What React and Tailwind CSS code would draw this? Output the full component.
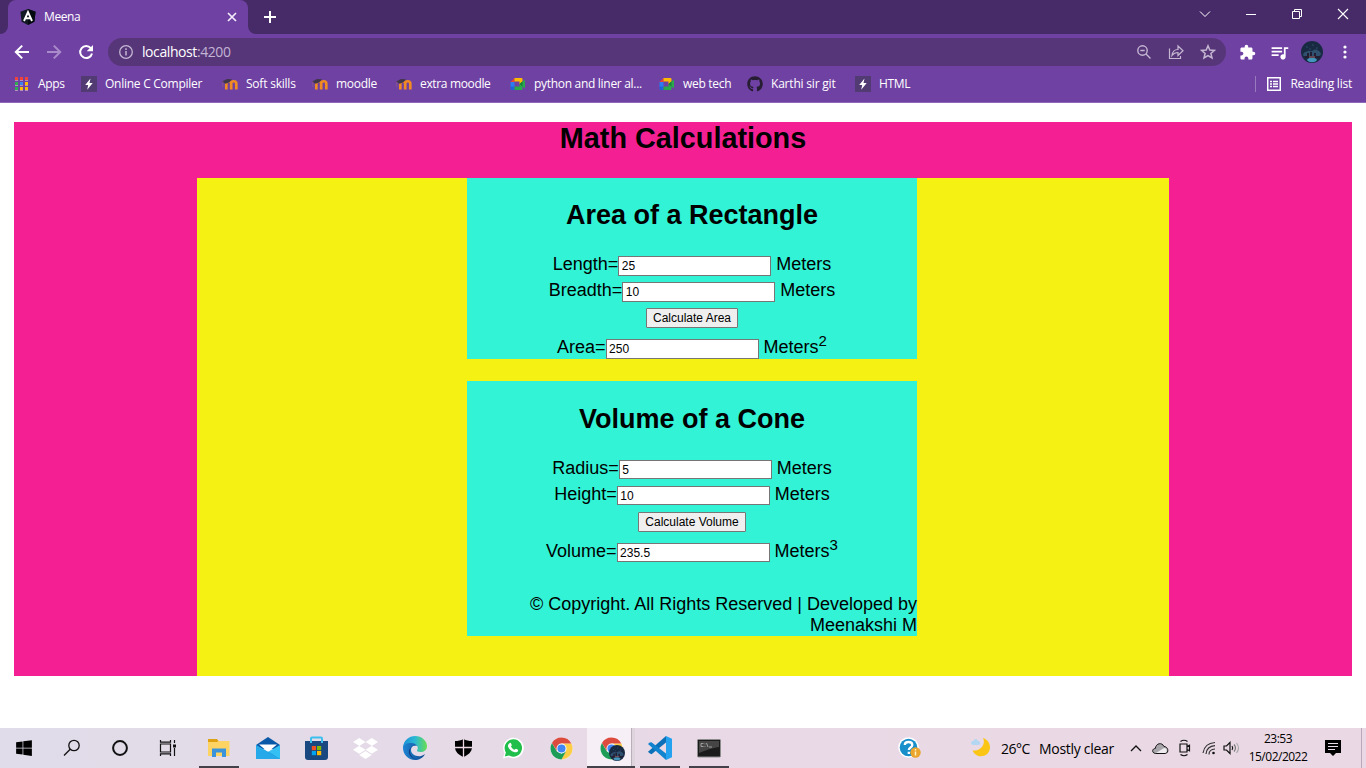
import React from "react";
import { FaWindows, FaGithub, FaDropbox } from "react-icons/fa";
import { MdExtension, MdQueueMusic } from "react-icons/md";

const ui = "font-['Open_Sans','Noto_Sans',sans-serif]";

function AngularIcon() {
  return (
    <svg width="16" height="16" viewBox="0 0 16 16">
      <path d="M8 0l7.6 2.7-1.2 10L8 16l-6.400-3.300L.4 2.700z" fill="#111a24" />
      <path d="M8 0l7.600 2.700-1.200 10L8 16z" fill="#050a10" />
      <path d="M4 12L8 3l4 9M5.500 9.300h5" fill="none" stroke="#fff" strokeWidth="1.900" />
    </svg>
  );
}

function AppsIcon() {
  const colors = ["#f0433a", "#f0433a", "#f0433a", "#31a852", "#3b82f0", "#fbbc05", "#31a852", "#fbbc05", "#fbbc05"];
  return (
    <svg width="14" height="14" viewBox="0 0 14 14">
      {colors.map((c, i) => (
        <g key={i}>
          <rect x={(i % 3) * 5} y={Math.floor(i / 3) * 5} width="3" height="4" fill="#b58fc0" />
          <rect x={(i % 3) * 5} y={Math.floor(i / 3) * 5} width="3" height="3" fill={c} />
        </g>
      ))}
    </svg>
  );
}

function BoltIcon() {
  return (
    <svg width="16" height="16" viewBox="0 0 16 16">
      <rect width="16" height="16" fill="#523a73" />
      <path d="M9.500 2.500L4.200 9h3l-1 4.700L11.700 7H8.500z" fill="#fff" />
    </svg>
  );
}

function MoodleIcon() {
  return (
    <svg width="16" height="16" viewBox="0 0 16 16">
      <path d="M4.300 13.500V7.500c0-3 4.900-3 4.900 0v6M9.200 7.500c0-3 5.100-3 5.100 0v6" fill="none" stroke="#f08a22" strokeWidth="2.700" />
      <path d="M0 5.500l5-2.500 5 .300-2.500 3-4 1.500z" fill="#40364a" />
      <path d="M.8 5.500V11" stroke="#8a5c86" strokeWidth=".8" />
    </svg>
  );
}

function MeetIcon() {
  return (
    <svg width="16" height="16" viewBox="0 0 16 16">
      <path d="M.5 6L4.500 2v4z" fill="#ea4335" />
      <path d="M4.500 2h6.700c.8 0 1.300.5 1.300 1.300V6L9.500 8.500V5.500h-5z" fill="#ffba00" />
      <path d="M.5 6h4v5h-4z" fill="#2b7cf0" />
      <path d="M.5 10.500h4V14H2C1 14 .5 13.500.5 12.700z" fill="#1c66da" />
      <path d="M4.500 10.500h5V8L15 3.500v9L12.500 10.500v2.200c0 .8-.5 1.300-1.300 1.300H4.500z" fill="#29a84c" />
      <path d="M9.500 8l3-2.700v5.200z" fill="#188038" />
    </svg>
  );
}

function Avatar({ size }) {
  return (
    <svg width={size} height={size} viewBox="0 0 22 22">
      <circle cx="11" cy="11" r="11" fill="#182a42" />
      <path d="M2 14c1-4 4-3 5-4s2 1 4 0 3-2 5-1 3 1 4 4c-2 5-16 6-18 1z" fill="#30506f" />
      <path d="M6 19c1-3 9-3 10 0-2 3-8 3-10 0z" fill="#4596bd" />
      <path d="M3 15h3v-3h2v3h1v-4h2v4h2v-3h2v3h4v2H4z" fill="#221d31" />
      <path d="M8 16h6" stroke="#c08488" strokeWidth=".8" />
      <g fill="#46769a">
        <circle cx="6" cy="6" r=".6" /><circle cx="12" cy="4" r=".6" /><circle cx="16" cy="7" r=".6" /><circle cx="9" cy="8" r=".5" />
      </g>
    </svg>
  );
}

function ChromeIcon({ size = 23 }) {
  return (
    <svg width={size} height={size} viewBox="0 0 48 48">
      <circle cx="24" cy="24" r="23" fill="#fff" />
      <path d="M24 13.500h20.500A23 23 0 0 1 24 47l9-17.500z" fill="#fccd45" />
      <path d="M4.100 12.500A23 23 0 0 0 24 47l9.500-17.500L24 34.500 14.500 30z" fill="#1d9d58" />
      <path d="M4.100 12.500L15 30l9-16.500h20.500A23 23 0 0 0 4.100 12.500z" fill="#dc4b3e" />
      <circle cx="24" cy="24" r="10.500" fill="#fff" />
      <circle cx="24" cy="24" r="8.500" fill="#4285f4" />
    </svg>
  );
}

const bookmarks = [
  { label: "Apps", icon: <AppsIcon />, w: "w-[67px]", gap: "gap-[9px] pl-px", t: "tracking-[-0.3px]" },
  { label: "Online C Compiler", icon: <BoltIcon />, w: "w-[141px]", gap: "gap-2", t: "tracking-[-0.26px]" },
  { label: "Soft skills", icon: <MoodleIcon />, w: "w-[90px]", gap: "gap-2", t: "tracking-[-0.22px]" },
  { label: "moodle", icon: <MoodleIcon />, w: "w-[84px]", gap: "gap-2", t: "tracking-[-0.3px]" },
  { label: "extra moodle", icon: <MoodleIcon />, w: "w-[114px]", gap: "gap-2", t: "tracking-[-0.35px]" },
  { label: "python and liner al...", icon: <MeetIcon />, w: "w-[149px]", gap: "gap-2", t: "tracking-[-0.3px]" },
  { label: "web tech", icon: <MeetIcon />, w: "w-[88px]", gap: "gap-2", t: "tracking-[-0.3px]" },
  { label: "Karthi sir git", icon: <FaGithub size={16} color="#271d33" />, w: "w-[108px]", gap: "gap-2", t: "tracking-[-0.2px]" },
  { label: "HTML", icon: <BoltIcon />, w: "w-[70px]", gap: "gap-2", t: "tracking-[-0.3px]" },
];

function Browser() {
  return (
    <header className={`${ui} flex h-[103px] shrink-0 flex-col border-b border-[#9068b8] bg-[#6f41a3] text-xs text-white`}>
      <div className="flex h-[34px] shrink-0 bg-[#472a68]">
        <div className="flex w-2 items-end bg-[#6f41a3]">
          <div className="h-[34px] w-2 rounded-br-lg bg-[#472a68]" />
        </div>
        <div className="flex w-60 items-center rounded-t-lg bg-[#6f41a3] pr-[11px] pl-3">
          <AngularIcon />
          <span className="ml-2 grow tracking-[-0.4px]">Meena</span>
          <svg width="10" height="10" viewBox="0 0 10 10" className="shrink-0">
            <path d="M1 1l8 8M9 1L1 9" stroke="#f3edfa" strokeWidth="1.700" />
          </svg>
        </div>
        <div className="w-2 bg-[#6f41a3]">
          <div className="h-[34px] w-2 rounded-bl-lg bg-[#472a68]" />
        </div>
        <svg width="12" height="12" viewBox="0 0 12 12" className="mt-[11px] ml-2">
          <path d="M6 0v12M0 6h12" stroke="#fff" strokeWidth="2" />
        </svg>
        <div className="ml-auto flex h-7 items-center pr-[17px]">
          <svg width="12" height="12" viewBox="0 0 12 12" className="mr-[34px]"><path d="M1 3.500l5 5 5-5" fill="none" stroke="#fff" /></svg>
          <svg width="12" height="12" viewBox="0 0 12 12" className="mr-[34px]"><path d="M1 6.500h10" stroke="#fff" /></svg>
          <svg width="12" height="12" viewBox="0 0 12 12" className="mr-[34px]"><path d="M1.500 3.500h7v7h-7zM3.500 3.500v-2h7v7h-2" fill="none" stroke="#fff" /></svg>
          <svg width="12" height="12" viewBox="0 0 12 12"><path d="M1 1l10 10M11 1L1 11" fill="none" stroke="#fff" strokeWidth="1.100" /></svg>
        </div>
      </div>
      <div className="flex h-9 shrink-0 items-center pl-3.5">
        <svg width="16" height="16" viewBox="0 0 16 16"><path d="M15 8H2M8.200 1.600L1.800 8l6.400 6.400" fill="none" stroke="#fff" strokeWidth="2" /></svg>
        <svg width="16" height="16" viewBox="0 0 16 16" className="ml-4"><path d="M1 8h13M7.800 1.600L14.200 8l-6.400 6.400" fill="none" stroke="#aa8bc9" strokeWidth="2" /></svg>
        <svg width="16" height="16" viewBox="0 0 16 16" className="ml-4">
          <path d="M12.800 4.200A6 6 0 1 0 14 9.500" fill="none" stroke="#fff" strokeWidth="2" />
          <path d="M15 1v6.300H8.700z" fill="#fff" />
        </svg>
        <div className="ml-3.5 flex h-7 w-[1118px] items-center rounded-full bg-[#563678] pr-[10px] pl-[11px] text-[14px]">
          <svg width="14" height="14" viewBox="0 0 14 14"><circle cx="7" cy="7" r="6.300" fill="none" stroke="#c5b7d3" strokeWidth="1.300" /><path d="M7 6v4.500M7 3.300v1.600" stroke="#c5b7d3" strokeWidth="1.500" /></svg>
          <span className="ml-[9px] grow tracking-[-0.42px]">localhost<span className="text-[#c3b3d4]">:4200</span></span>
          <svg width="16" height="16" viewBox="0 0 16 16" fill="none" stroke="#c5b7d3" strokeWidth="1.400"><circle cx="6.500" cy="6.500" r="4.700" /><path d="M10 10l4.500 4.500M4.300 6.500h4.400" /></svg>
          <svg width="16" height="16" viewBox="0 0 16 16" fill="none" stroke="#c5b7d3" strokeWidth="1.200" className="ml-4"><path d="M1.500 4.500v10h11V12" /><path d="M4 11.500c.5-4 3-6 6-6V2l5 4.800-5 4.700V8.500C7.500 8.500 5.500 9.500 4 11.500z" /></svg>
          <svg width="16" height="16" viewBox="0 0 16 16" fill="none" stroke="#c5b7d3" strokeWidth="1.500" className="ml-4"><path d="M8 1.800l1.800 4.200 4.600.4-3.500 3 1.100 4.500-4-2.400-4 2.400 1.100-4.500-3.500-3L6.200 6z" /></svg>
        </div>
        <MdExtension size={17} className="ml-[13px]" />
        <MdQueueMusic size={21} className="ml-[13px]" />
        <div className="ml-[11px]"><Avatar size={22} /></div>
        <svg width="4" height="14" viewBox="0 0 4 14" fill="#fff" className="ml-[20px]"><circle cx="2" cy="2" r="1.600" /><circle cx="2" cy="7" r="1.600" /><circle cx="2" cy="12" r="1.600" /></svg>
      </div>
      <div className="flex h-7 items-center pl-3.5">
        {bookmarks.map((b, i) => (
          <div key={i} className={`flex shrink-0 items-center whitespace-nowrap ${b.w} ${b.gap} ${b.t}`}>
            <span className="shrink-0">{b.icon}</span>
            <span>{b.label}</span>
          </div>
        ))}
        <div className="ml-auto flex items-center pr-3.5">
          <div className="h-4 w-px bg-[#9a79be]" />
          <svg width="14" height="14" viewBox="0 0 14 14" className="ml-[11px]" fill="none" stroke="#fff"><rect x=".75" y=".75" width="12.500" height="12.500" strokeWidth="1.500" /><path d="M3 4.500h2M6 4.500h5M3 7h2M6 7h5M3 9.500h2M6 9.500h5" strokeWidth="1.400" /></svg>
          <span className="ml-[9px] tracking-[-0.22px]">Reading list</span>
        </div>
      </div>
    </header>
  );
}

function Field({ label, value, sup, className }) {
  return (
    <div className={`flex shrink-0 items-baseline justify-center leading-[21px] ${className}`}>
      <label>{label}=</label>
      <input
        readOnly
        value={value}
        className="h-[19.500px] w-[153px] border border-[#767676] bg-white pr-0.5 pl-[2.500px] text-xs leading-[14px]"
      />
      <span className="ml-[5px]">Meters</span>
      {sup && <span className="relative -top-[7px] text-[15px] leading-none">{sup}</span>}
    </div>
  );
}

function Card({ title, fields, action, result, className, titleClass, children }) {
  return (
    <section className={`ml-[270px] flex w-[450px] flex-col items-stretch bg-[#32f3d5] ${className}`}>
      <h2 className={`shrink-0 text-center text-[27px] leading-[31px] font-bold ${titleClass}`}>{title}</h2>
      {fields.map((f) => (
        <Field key={f[0]} label={f[0]} value={f[1]} className="h-[26px]" />
      ))}
      <div className="flex h-[31px] shrink-0 justify-center pt-[2.200px]">
        <button className="h-5 rounded-[1px] border border-[#767676] bg-[#efefef] px-1.5 text-xs leading-[18px]">{action}</button>
      </div>
      <Field label={result[0]} value={result[1]} sup={result[2]} />
      {children}
    </section>
  );
}

function MathPage() {
  return (
    <main className="h-[625px] shrink-0 bg-white px-3.5 pt-[19px] font-['Liberation_Sans',Arial,sans-serif] text-lg text-black">
      <div className="h-[554px] bg-[#f42093]">
        <h1 className="h-14 text-center text-[28.800px] leading-[33px] font-bold">Math Calculations</h1>
        <div className="ml-[183px] h-[498px] w-[972px] bg-[#f5f213]">
          <Card
            title="Area of a Rectangle"
            fields={[["Length", "25"], ["Breadth", "10"]]}
            action="Calculate Area"
            result={["Area", "250", "2"]}
            className="h-[181px] pt-[22px]"
            titleClass="h-[54px]"
          />
          <div className="h-[22px]" />
          <Card
            title="Volume of a Cone"
            fields={[["Radius", "5"], ["Height", "10"]]}
            action="Calculate Volume"
            result={["Volume", "235.5", "3"]}
            className="h-[255px] pt-[22.500px]"
            titleClass="h-[54px]"
          >
            <p className="mt-auto text-right leading-[21px]">
              © Copyright. All Rights Reserved | Developed by
              <br />
              Meenakshi M
            </p>
          </Card>
        </div>
      </div>
    </main>
  );
}

function SearchIcon() {
  return <svg width="18" height="18" viewBox="0 0 18 18" fill="none" stroke="#111" strokeWidth="1.300"><circle cx="11" cy="6.500" r="5.200" /><path d="M7.200 10.300L1 16.500" /></svg>;
}
function CortanaIcon() {
  return <svg width="18" height="18" viewBox="0 0 18 18"><circle cx="9" cy="9" r="6.900" fill="none" stroke="#111" strokeWidth="2" /></svg>;
}
function TaskViewIcon() {
  return <svg width="18" height="16" viewBox="0 0 18 16" fill="none" stroke="#111" strokeWidth="1.200"><path d="M1.500 4h10v8h-10zM1.500 0v2.200h10V0M1.500 16v-2.200h10V16M15.500 0v3M15.500 8v8" /><path d="M14 4.500h3v3h-3z" fill="#111" stroke="none" /></svg>;
}
function FolderIcon() {
  return (
    <svg width="22" height="20" viewBox="0 0 22 20">
      <path d="M0 1.500Q0 1 .5 1H9l1.500 2H21v6H0z" fill="#dfa012" />
      <path d="M0 4h9l1.500-1H21.500v15H0z" fill="#fdd363" />
      <path d="M4 19v-8.500h14V19h-4v-4.500H8V19z" fill="#3b93dc" />
    </svg>
  );
}
function MailIcon() {
  return (
    <svg width="24" height="24" viewBox="0 0 24 24">
      <path d="M0 9l12-8 12 8v4H0z" fill="#0a58a8" />
      <path d="M3 8.500h18L12 16z" fill="#fff" />
      <path d="M0 9l12 7-8 7H0z" fill="#28b4ee" />
      <path d="M24 9v14H3l9-7z" fill="#35c0f4" />
      <path d="M12 15.500L24 23H0z" fill="#1692dd" />
      <path d="M0 9l24 14H0z" fill="#25a9e8" />
    </svg>
  );
}
function StoreIcon() {
  return (
    <svg width="23" height="24" viewBox="0 0 23 24">
      <path d="M0 5h23v16q0 3-3 3H3q-3 0-3-3z" fill="#19477f" />
      <path d="M6 7V2.500Q6 1.500 7 1.500h9q1 0 1 1V7" fill="none" stroke="#3dbfee" strokeWidth="2" />
      <path d="M6.800 10h4.200v4.200H6.800z" fill="#f25022" /><path d="M12 10h4.200v4.200H12z" fill="#7fba00" />
      <path d="M6.800 15h4.200v4.200H6.800z" fill="#00a4ef" /><path d="M12 15h4.200v4.200H12z" fill="#ffb900" />
    </svg>
  );
}
function EdgeIcon() {
  return (
    <svg width="24" height="24" viewBox="0 0 24 24">
      <defs>
        <linearGradient id="edgeTop" x1="0" x2="1"><stop offset="0" stopColor="#1c8fd6" /><stop offset=".5" stopColor="#2bb8d5" /><stop offset="1" stopColor="#67de52" /></linearGradient>
        <linearGradient id="edgeLow" x1="0" x2="1"><stop offset="0" stopColor="#1e85d3" /><stop offset="1" stopColor="#104b93" /></linearGradient>
      </defs>
      <path d="M0 11C1 4 6 0 12 0c7 0 12 5 12 10 0 4-3 6-6.500 6-3 0-4-1-3.300-2 1.800-3-.5-6-5.200-6C5 8 1 10 0 13z" fill="url(#edgeTop)" />
      <path d="M0 12c0-3 4-5 8-5 3 0 5 1 6 3-4-1-6 1-6 4 0 4 5 7 10 6 2-.4 3-1.500 4-2-2 4-6 6-10 6C5 24 0 18 0 12z" fill="url(#edgeLow)" />
      <path d="M9 10c-4 5-2 11 5 13.700C6 22 3 15 9 10z" fill="#143f82" />
    </svg>
  );
}
function ShieldIcon() {
  return (
    <svg width="17" height="18" viewBox="0 0 17 18">
      <path d="M8.500 0C6 1.500 3 2 0 2v6c0 5 4 8 8.500 10C13 16 17 13 17 8V2C14 2 11 1.500 8.500 0z" fill="#000" />
      <path d="M8.500 0v18M0 8.500h17" stroke="#ecd9e5" strokeWidth="1.300" />
    </svg>
  );
}
function WhatsIcon() {
  return (
    <svg width="22" height="22" viewBox="0 0 22 22">
      <path d="M1 21.500l1.500-5.500A10.300 10.300 0 1 1 6.500 20z" fill="#fff" />
      <path d="M2.800 19.600l1.100-4.100A8.700 8.700 0 1 1 7 18.500z" fill="#20be4b" />
      <path d="M7.500 6.200c1-1 1.500-.2 2.200 1.800.2.600-.8 1.200-.7 1.500.7 1.500 2 2.700 3.500 3.200.5 0 1-1.200 1.500-1 2 .9 2.500 1.100 2 2.200-.7 1.500-2.500 1.700-4 1.200-2.700-.8-5-3-5.900-5.400-.5-1.300.3-2.700 1.400-3.500z" fill="#fff" />
    </svg>
  );
}
function CodeIcon() {
  return (
    <svg width="24" height="24" viewBox="0 0 24 24">
      <path d="M18 0v6.500L3.500 18.200 1.600 17.300 0 15.800z" fill="#0b70b8" />
      <path d="M0 8l1.600-1.500 1.900-.2L18 17.500V24z" fill="#1284cf" />
      <path d="M18 0l6 2.800v18.400L18 24z" fill="#24a1ef" />
    </svg>
  );
}
function TerminalIcon() {
  return (
    <svg width="24" height="19" viewBox="0 0 24 19">
      <rect x=".5" y=".5" width="23" height="17.500" rx="1" fill="#1b1b1b" stroke="#8c8c8c" />
      <path d="M2 2h20v6C15 9 9 11 2 14z" fill="#454545" />
      <path d="M6.500 4.500H4v3h2.500M8 4.500v.8M8 7v.8M9.500 4l1.500 4M12 8h3" stroke="#a9a9a9" fill="none" strokeWidth=".9" />
    </svg>
  );
}

const apps = [
  { icon: <FolderIcon />, open: true },
  { icon: <MailIcon /> },
  { icon: <StoreIcon /> },
  { icon: <FaDropbox size={25} color="#fff" /> },
  { icon: <EdgeIcon /> },
  { icon: <ShieldIcon /> },
  { icon: <WhatsIcon /> },
  { icon: <ChromeIcon /> },
  { active: true },
  { icon: <CodeIcon />, open: true },
  { icon: <TerminalIcon />, open: true },
];

function Taskbar() {
  return (
    <footer className={`${ui} flex h-10 shrink-0 items-stretch bg-linear-to-r from-[#e0dce9] via-[#e9d9e6] to-[#ead9e4] text-black`}>
      <div className="flex w-[194px] *:flex *:w-12 *:items-center *:justify-center">
        <div><FaWindows size={18} /></div>
        <div><SearchIcon /></div>
        <div><CortanaIcon /></div>
        <div><TaskViewIcon /></div>
      </div>
      {apps.map((a, i) =>
        a.active ? (
          <div key={i} className="flex w-[49px] shrink-0 pl-px">
            <div className="flex w-full border-b-2 border-[#45414a]">
              <div className="flex w-11 items-center justify-center bg-[#f6eff6]">
                <div className="relative ml-1 flex pt-0.5">
                  <ChromeIcon />
                  <div className="absolute top-2.5 left-[9px] h-4 w-4"><Avatar size={16} /></div>
                </div>
              </div>
              <div className="grow border-l border-[#b9afbb] bg-[#ded4de]" />
            </div>
          </div>
        ) : (
          <div key={i} className="flex w-[49px] shrink-0 justify-center">
            <div className={`flex w-10 items-center justify-center border-b-2 pt-0.5 ${a.open ? "border-[#45414a]" : "border-transparent"}`}>
              {a.icon}
            </div>
          </div>
        )
      )}
      <div className="ml-auto flex items-center">
        <svg width="24" height="22" viewBox="0 0 24 22">
          <circle cx="10.500" cy="10.500" r="10.300" fill="#fff" /><circle cx="10.500" cy="10.500" r="8.800" fill="#188fca" />
          <path d="M6.800 8c0-4 7.500-4 7.500 0 0 2.500-3.500 2.500-3.500 5M10.800 14.700v2.300" fill="none" stroke="#fff" strokeWidth="2.300" />
          <circle cx="17.500" cy="15.500" r="5.200" fill="#eba42c" /><path d="M17.500 14.500v4M17.500 12v1.500" stroke="#fff3c8" strokeWidth="1.500" />
        </svg>
        <svg width="20" height="20" viewBox="0 0 20 20" className="ml-[49px]">
          <path d="M12 0c3 6-2 13-10.500 12.500C5 21 18 20 19 10 19.300 5 16 1 12 0z" fill="#fac515" />
          <path d="M0 5c0-2 2-2 2.500-2 1-3 4-2 4.500 0 3 0 3 4 0 4H2C1 7 0 6 0 5z" fill="#b3d7f1" />
        </svg>
        <span className="ml-[10px] w-[38px] text-[14px] tracking-[-0.5px]">26°C</span>
        <span className="w-[91px] text-[14px] tracking-[-0.3px] whitespace-nowrap">Mostly clear</span>
        <svg width="12" height="8" viewBox="0 0 12 8"><path d="M1 7l5-5 5 5" fill="none" stroke="#111" strokeWidth="1.300" /></svg>
        <svg width="17" height="13" viewBox="0 0 17 13" className="ml-[10px]"><path d="M3.500 11.500C-.5 11 0 6.500 3.300 6.500 4 1 10 0 12 4.500c4 0 5.500 6 1.500 7z" fill="#a8a6aa" stroke="#111" /><path d="M4 11l8-5c3-.5 4 4 1 5z" fill="#efebee" /></svg>
        <svg width="14" height="18" viewBox="0 0 14 18" fill="none" stroke="#111" strokeWidth="1.200" className="ml-[9px]"><path d="M2 5h7v8H2zM9 7.500l2.500-1.300v5.600L9 10.500M2.500 2.500Q6 0 9.500 2.500M2.500 15.500Q6 18 9.500 15.500" /></svg>
        <svg width="14" height="14" viewBox="0 0 14 14" fill="none" stroke="#333" strokeWidth="1.200" className="ml-[10px]"><path d="M1 12C2 5.500 6 2 13 1.500M4 13c.5-5 3.500-8 9-8.300M7 13.500c0-3 2-5.300 6-5.500" /><circle cx="11.500" cy="12" r="1.300" fill="#111" stroke="none" /></svg>
        <svg width="17" height="14" viewBox="0 0 17 14" fill="none" stroke="#111" strokeWidth="1.200" className="ml-[7px]"><path d="M1 5h2.500L7 1.500v11L3.500 9H1zM9 5q1.500 2 0 4" /><path d="M11 3.500q3 3.500 0 7" stroke="#777" /><path d="M13.500 2q4 5 0 10" stroke="#aaa" /></svg>
        <div className="ml-[6px] flex w-[64px] flex-col items-center text-xs leading-[18px] tracking-[-0.5px]">
          <span>23:53</span>
          <span>15/02/2022</span>
        </div>
        <svg width="16" height="16" viewBox="0 0 16 16" className="ml-[15px]"><path d="M0 0h16v13h-5l-3 3-3-3H0z" fill="#000" /><path d="M3 3.500h10M3 6.500h10M3 9.500h7" stroke="#e7dce7" /></svg>
        <div className="mr-1 ml-5 h-10 w-px bg-[#b9a9b8]" />
      </div>
    </footer>
  );
}

export default function App() {
  return (
    <div className="flex h-[768px] w-[1366px] flex-col overflow-hidden">
      <Browser />
      <MathPage />
      <Taskbar />
    </div>
  );
}
